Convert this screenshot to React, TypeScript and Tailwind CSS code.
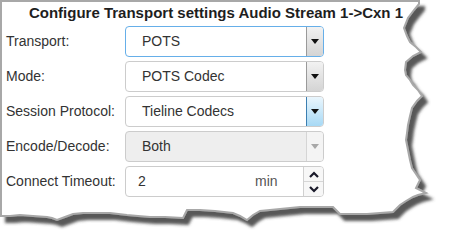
import React from "react";

// torn-paper outline of the dialog snapshot
const PAPER =
  "1,1 419,1 419,4 414,10 408,18 404,28 407,36 410,42 416,47 421,52 413,56 406,62 405,70 406,75 410,80 413,85 418,90 422,96 417,101 412,108 410,116 408,125 407,133 406,140 408,150 410,160 412,168 416,174 420,180 416,188 426,193 418,195 413,197 406,201 400,205 396,209 393,212 380,213 367,214 352,214 340,214 336,210 333,207 318,207 300,207 280,209 260,211 253,215 247,220 240,216 233,213 215,211 200,210 187,210 185,214 183,218 165,217 150,217 138,216 127,215 110,213 93,213 83,213 73,214 65,217 57,220 52,218 47,217 33,216 20,215 10,216 1,216";

const rows = [
  { label: "Transport:", value: "POTS", kind: "focus" },
  { label: "Mode:", value: "POTS Codec", kind: "normal" },
  { label: "Session Protocol:", value: "Tieline Codecs", kind: "hover" },
  { label: "Encode/Decode:", value: "Both", kind: "disabled" },
];

const Caret = ({ color }: { color: string }) => (
  <svg width="8" height="5" viewBox="0 0 8 5">
    <path d="M0 0 H8 L4 5 Z" fill={color} />
  </svg>
);

const SelectBox = ({ value, kind }: { value: string; kind: string }) => {
  const border =
    kind === "focus" ? "border-[#66afe9]" : "border-[#cccccc]";
  const bg = kind === "disabled" ? "bg-[#eeeeee]" : "bg-white";
  const btn =
    kind === "hover"
      ? "bg-gradient-to-b from-[#eaf6fd] to-[#a7d9f5] border-l-[#3c7fb1]"
      : kind === "disabled"
      ? "bg-gradient-to-b from-[#f4f4f4] to-[#f4f4f4] border-l-[#d5d5d5]"
      : "bg-gradient-to-b from-[#f2f2f2] to-[#d4d4d4] border-l-[#9a9a9a]";
  return (
    <div className={`flex h-[31px] w-[199px] rounded-[4px] border ${border} ${bg}`}>
      <div className="flex flex-1 items-center pl-[16px] text-[14px] text-[#333333]">{value}</div>
      <div className={`flex w-[17px] items-center justify-center border-l rounded-r-[3px] ${btn}`}>
        <Caret color={kind === "disabled" ? "#a8a8a8" : "#111111"} />
      </div>
    </div>
  );
};

const Chevron = ({ up }: { up?: boolean }) => (
  <svg width="10" height="7" viewBox="0 0 10 7">
    <path
      d={up ? "M1 6 L5 2 L9 6" : "M1 1 L5 5 L9 1"}
      fill="none"
      stroke="#1a1a2a"
      strokeWidth="2.2"
    />
  </svg>
);

export default function App() {
  return (
    <div className="relative h-[249px] w-[451px] bg-white font-['Liberation_Sans',Arial,sans-serif]">
      <svg className="absolute inset-0" width="451" height="249">
        <defs>
          <filter id="torn" x="-5%" y="-5%" width="115%" height="120%">
            <feDropShadow dx="5" dy="6" stdDeviation="1.5" floodColor="#474747" floodOpacity="0.9" />
          </filter>
        </defs>
        <polygon points={PAPER} fill="#ffffff" stroke="#a8a8a8" strokeWidth="2" filter="url(#torn)" />
      </svg>

      <div className="relative pl-[6px]">
        <h1 className="h-[26px] w-[420px] pt-[3px] text-center text-[15px] font-bold leading-[20px] text-[#1e1e1e]">
          Configure Transport settings Audio Stream 1-&gt;Cxn 1
        </h1>

        <div className="flex flex-col gap-[4px]">
          {rows.map((r) => (
            <div key={r.label} className="flex items-center">
              <div className="w-[119px] text-[14px] text-[#333333]">{r.label}</div>
              <SelectBox value={r.value} kind={r.kind} />
            </div>
          ))}

          <div className="flex items-center">
            <div className="w-[119px] text-[14px] text-[#333333]">Connect Timeout:</div>
            <div className="flex h-[31px] w-[199px] rounded-[4px] border border-[#cccccc] bg-white">
              <div className="flex w-[129px] items-center pl-[12px] text-[14px] text-[#333333]">2</div>
              <div className="flex flex-1 items-center text-[14px] text-[#555555]">min</div>
              <div className="flex w-[20px] flex-col border-l border-[#d0d0d0] bg-[#f7f7f7] rounded-r-[3px]">
                <div className="flex flex-1 items-center justify-center border-b border-[#d6d6d6]">
                  <Chevron up />
                </div>
                <div className="flex flex-1 items-center justify-center">
                  <Chevron />
                </div>
              </div>
            </div>
          </div>
        </div>
      </div>
    </div>
  );
}
